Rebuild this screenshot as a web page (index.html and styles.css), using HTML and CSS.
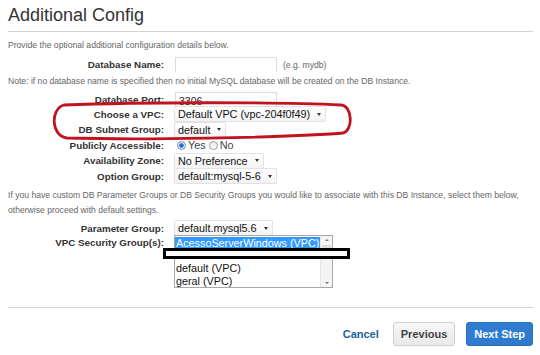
FILE: index.html
```html
<!doctype html>
<html>
<head>
<meta charset="utf-8">
<title>Additional Config</title>
<link rel="stylesheet" href="styles.css">
</head>
<body>
  <div id="page">
    <h1 class="title">Additional Config</h1>
    <div class="rule"></div>
    <p class="hint">Provide the optional additional configuration details below.</p>

    <div class="row">
      <span class="label">Database Name:</span>
      <span class="input"></span>
      <span class="example">(e.g. mydb)</span>
    </div>
    <p class="hint note">Note: if no database name is specified then no initial MySQL database will be created on the DB Instance.</p>

    <div class="row">
      <span class="label">Database Port:</span>
      <span class="input">3306</span>
    </div>
    <div class="row">
      <span class="label">Choose a VPC:</span>
      <span class="select">Default VPC (vpc-204f0f49)</span>
    </div>
    <div class="row">
      <span class="label">DB Subnet Group:</span>
      <span class="select">default</span>
    </div>
    <div class="row">
      <span class="label">Publicly Accessible:</span>
      <span class="radio on"></span><span class="radio-text">Yes</span>
      <span class="radio"></span><span class="radio-text">No</span>
    </div>
    <div class="row">
      <span class="label">Availability Zone:</span>
      <span class="select">No Preference</span>
    </div>
    <div class="row">
      <span class="label">Option Group:</span>
      <span class="select">default:mysql-5-6</span>
    </div>

    <p class="hint groups">If you have custom DB Parameter Groups or DB Security Groups you would like to associate with this DB Instance, select them below, otherwise proceed with default settings.</p>

    <div class="row">
      <span class="label">Parameter Group:</span>
      <span class="select">default.mysql5.6</span>
    </div>
    <div class="row top">
      <span class="label">VPC Security Group(s):</span>
      <div class="listbox">
        <div class="items">
          <div class="item selected">AcessoServerWindows (VPC)</div>
          <div class="item">&nbsp;</div>
          <div class="item">default (VPC)</div>
          <div class="item">geral (VPC)</div>
        </div>
        <div class="scrollbar">
          <span class="arrow up"></span>
          <span class="thumb"></span>
          <span class="arrow down"></span>
        </div>
      </div>
    </div>

    <div class="rule bottom"></div>
    <div class="actions">
      <a class="cancel" href="#">Cancel</a>
      <button class="btn">Previous</button>
      <button class="btn primary">Next Step</button>
    </div>
  </div>

  <!-- annotations drawn over the screenshot -->
  <svg class="mark" width="540" height="355" viewBox="0 0 540 355">
    <path d="M 64 105 C 140 102, 280 102, 341 105 C 353 106, 353 131, 343 133 C 280 138, 140 140, 67 138 C 51 136, 50 109, 64 105 Z" fill="none" stroke="#c1121f" stroke-width="2.8"/>
  </svg>
  <div class="redact"></div>
</body>
</html>
```

FILE: styles.css
```css
html, body {
  margin: 0;
  padding: 0;
  background: #fff;
}

body {
  width: 540px;
  height: 355px;
  overflow: hidden;
  position: relative;
  font-family: "Liberation Sans", Arial, sans-serif;
  color: #222;
}

#page {
  padding: 0 7px 0 8px;
}

.title {
  margin: 0;
  padding-top: 4px;
  height: 27px;
  font-size: 18px;
  font-weight: normal;
  line-height: 22px;
  color: #333;
}

.rule {
  height: 1px;
  background: #d4d4d4;
}

.hint {
  margin: 6px 0 4px;
  font-size: 8.6px;
  line-height: 15px;
  color: #666;
}

.hint.note {
  margin: 2px 0 2px;
}

.hint.groups {
  margin: 4px 0 3px;
}

.row {
  display: flex;
  align-items: center;
  height: 15.4px;
  font-size: 11px;
}

.row.top {
  align-items: flex-start;
  height: auto;
}

.label {
  width: 156px;
  padding-right: 10px;
  text-align: right;
  font-weight: bold;
  font-size: 9.8px;
  color: #333;
}

.row.top .label {
  padding-top: 1px;
}

.input {
  box-sizing: border-box;
  width: 102px;
  height: 15px;
  margin-left: 1px;
  padding: 1px 3px 0;
  border: 1px solid #dcdcdc;
  border-bottom: none;
  font-size: 10.5px;
  line-height: 14px;
  color: #222;
}

.example {
  margin-left: 6px;
  font-size: 8.6px;
  color: #666;
}

.select {
  display: inline-flex;
  align-items: center;
  height: 14px;
  padding: 0 4px 0 3px;
  border: 1px solid #e2e2e2;
  border-radius: 2px;
  background: linear-gradient(#fff, #f3f3f3);
  font-size: 10.8px;
  color: #111;
}

.select::after {
  content: "";
  margin-left: 7px;
  border-left: 2.5px solid transparent;
  border-right: 2.5px solid transparent;
  border-top: 3px solid #333;
}

.radio {
  box-sizing: border-box;
  width: 9px;
  height: 9px;
  margin: 0 2px 0 3px;
  border: 1px solid #9a9a9a;
  border-radius: 50%;
  background: linear-gradient(#e8e8e8, #fff);
}

.radio.on {
  border-color: #6d8fb9;
  background: radial-gradient(circle, #1f5fae 0, #3b7fd0 2px, #e6eef8 2.6px);
}

.radio-text {
  font-size: 10.8px;
  color: #444;
}

.listbox {
  display: flex;
  width: 159px;
  height: 53px;
  border: 1px solid #a8a8a8;
  box-sizing: border-box;
  margin-top: -1px;
}

.items {
  flex: 1;
  min-width: 0;
  padding-top: 1px;
  font-size: 10.8px;
}

.item {
  height: 12.6px;
  line-height: 12.6px;
  padding-left: 1px;
  white-space: nowrap;
  overflow: hidden;
  color: #111;
}

.item.selected {
  background: #3399ff;
  color: #fff;
}

.scrollbar {
  display: flex;
  flex-direction: column;
  width: 11px;
  background: #f4f4f4;
  border-left: 1px solid #e4e4e4;
}

.arrow {
  height: 8px;
  display: flex;
  justify-content: center;
  align-items: center;
}

.arrow::before {
  content: "";
  border-left: 2px solid transparent;
  border-right: 2px solid transparent;
}

.arrow.up::before {
  border-bottom: 2px solid #777;
}

.arrow.down::before {
  border-top: 2px solid #777;
}

.thumb {
  flex: 1;
  margin: 1px 1px 24px;
  background: #dcdcdc;
}

.rule.bottom {
  margin-top: 19px;
}

.actions {
  display: flex;
  justify-content: flex-end;
  align-items: center;
  gap: 11px;
  padding-top: 14px;
}

.cancel {
  margin-right: 3px;
  font-size: 11px;
  font-weight: bold;
  color: #1b5f99;
  text-decoration: none;
}

.btn {
  height: 24px;
  padding: 0 7px;
  border: 1px solid #d0d0d0;
  border-radius: 3px;
  background: linear-gradient(#f7f7f7, #e9e9e9);
  font-family: "Liberation Sans", Arial, sans-serif;
  font-size: 11px;
  font-weight: bold;
  color: #444;
}

.btn.primary {
  border-color: #2a6fbf;
  background: #2f7bd0;
  color: #fff;
}

.mark {
  position: absolute;
  top: 0;
  left: 0;
  pointer-events: none;
}

.redact {
  position: absolute;
  left: 163px;
  top: 248px;
  width: 181px;
  height: 5px;
  border: 3px solid #000;
  background: #fff;
}
```
